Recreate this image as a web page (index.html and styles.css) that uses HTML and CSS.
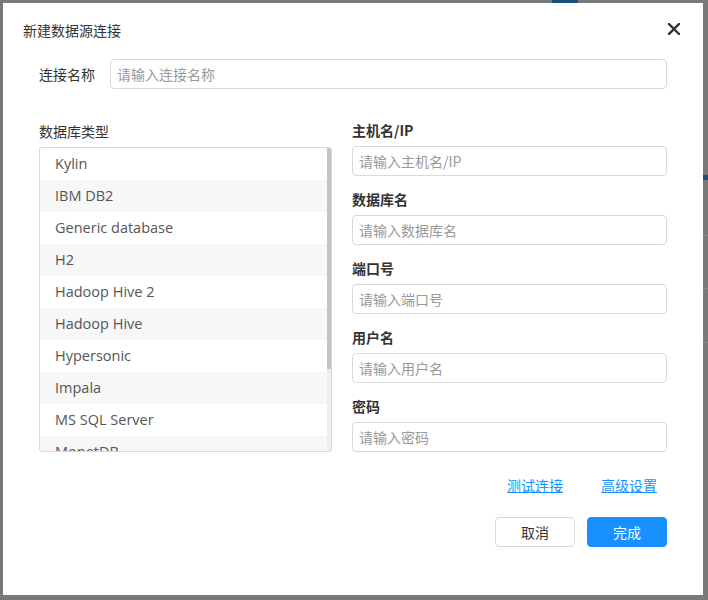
FILE: index.html
```html
<!DOCTYPE html>
<html lang="zh-CN">
<head>
<meta charset="utf-8">
<title>新建数据源连接</title>
<link rel="stylesheet" href="styles.css">
</head>
<body>
<div class="backdrop">
  <span class="bg-tab"></span>
  <span class="bg-edge-blue"></span>
  <span class="bg-line l1"></span>
  <span class="bg-line l2"></span>
  <span class="bg-line l3"></span>
</div>
<div class="dialog">
  <div class="header">
    <div class="title">新建数据源连接</div>
    <button class="close" aria-label="关闭">
      <svg width="12" height="12" viewBox="0 0 12 12"><path d="M1 1 L11 11 M11 1 L1 11" stroke="#333" stroke-width="2.4" stroke-linecap="square" fill="none"/></svg>
    </button>
  </div>
  <div class="name-row">
    <label class="name-label">连接名称</label>
    <input class="input name-input" placeholder="请输入连接名称">
  </div>
  <div class="columns">
    <div class="col-left">
      <div class="col-label">数据库类型</div>
      <div class="list">
        <ul class="items">
          <li>Kylin</li>
          <li>IBM DB2</li>
          <li>Generic database</li>
          <li>H2</li>
          <li>Hadoop Hive 2</li>
          <li>Hadoop Hive</li>
          <li>Hypersonic</li>
          <li>Impala</li>
          <li>MS SQL Server</li>
          <li>MonetDB</li>
        </ul>
        <div class="scrollbar"><div class="thumb"></div></div>
      </div>
    </div>
    <div class="col-right">
      <div class="field">
        <div class="field-label">主机名/IP</div>
        <input class="input" placeholder="请输入主机名/IP">
      </div>
      <div class="field">
        <div class="field-label">数据库名</div>
        <input class="input" placeholder="请输入数据库名">
      </div>
      <div class="field">
        <div class="field-label">端口号</div>
        <input class="input" placeholder="请输入端口号">
      </div>
      <div class="field">
        <div class="field-label">用户名</div>
        <input class="input" placeholder="请输入用户名">
      </div>
      <div class="field">
        <div class="field-label">密码</div>
        <input class="input" placeholder="请输入密码">
      </div>
    </div>
  </div>
  <div class="links">
    <a href="#">测试连接</a>
    <a href="#">高级设置</a>
  </div>
  <div class="buttons">
    <button class="btn">取消</button>
    <button class="btn btn-primary">完成</button>
  </div>
</div>
</body>
</html>
```
FILE: styles.css
```css
* { box-sizing: border-box; }
html, body { margin: 0; padding: 0; }
body {
  width: 708px;
  height: 600px;
  overflow: hidden;
  background: #77797b;
  font-family: "Open Sans", "Noto Sans CJK SC", sans-serif;
  font-size: 14px;
  color: #333;
  position: relative;
  padding: 3px 0 0 3px;
}
.backdrop { position: absolute; inset: 0; }
.bg-tab { position: absolute; left: 552px; top: 0; width: 26px; height: 3px; background: #1d4f7c; }
.bg-edge-blue { position: absolute; left: 703px; top: 175px; width: 5px; height: 5px; background: #1d4f7c; }
.bg-line { position: absolute; left: 703px; width: 5px; height: 1px; background: #8a8a8a; }
.l1 { top: 235px; }
.l2 { top: 288px; }
.l3 { top: 342px; }

.dialog {
  position: relative;
  width: 700px;
  height: 592px;
  background: #fff;
  padding: 17px 36px 0 20px;
  display: flex;
  flex-direction: column;
}
.header {
  display: flex;
  justify-content: space-between;
  align-items: center;
  height: 20px;
}
.title {
  font-size: 14px;
  line-height: 20px;
  color: #333;
  font-family: "Noto Sans CJK SC", sans-serif;
}
.close {
  border: 0;
  background: none;
  padding: 0;
  width: 12px;
  height: 12px;
  margin-right: -13px;
  margin-top: -2px;
  display: flex;
}
.name-row {
  margin-top: 19px;
  padding-left: 16px;
  display: flex;
  align-items: center;
  gap: 15px;
}
.name-label {
  font-family: "Noto Sans CJK SC", sans-serif;
  color: #333;
  line-height: 20px;
  white-space: nowrap;
}
.input {
  display: block;
  width: 100%;
  height: 30px;
  border: 1px solid #d9d9d9;
  border-radius: 4px;
  padding: 0 6px;
  font-family: "Noto Sans CJK SC", sans-serif;
  font-size: 14px;
  color: #333;
  outline: none;
  background: #fff;
}
.input::placeholder { color: #999; }
.name-input { flex: 1; height: 30px; }

.columns {
  margin-top: 31px;
  padding-left: 16px;
  display: flex;
  gap: 20px;
}
.col-left { width: 293px; flex: none; }
.col-right { flex: 1; display: flex; flex-direction: column; gap: 13px; }
.col-label {
  font-family: "Noto Sans CJK SC", sans-serif;
  line-height: 20px;
  color: #333;
  margin-top: 1px;
  margin-bottom: 6px;
}
.list {
  position: relative;
  height: 305px;
  border: 1px solid #d9d9d9;
  border-radius: 3px;
  overflow: hidden;
}
.items { list-style: none; margin: 0; padding: 0; }
.items li {
  height: 32px;
  line-height: 32px;
  padding-left: 15px;
  color: #555;
  font-size: 14.5px;
}
.items li:nth-child(even) { background: #f7f7f7; }
.scrollbar {
  position: absolute;
  top: 0;
  right: 0;
  width: 4px;
  height: 100%;
  background: #ededed;
}
.thumb { width: 4px; height: 221px; background: #c4c4c4; }

.field { display: flex; flex-direction: column; gap: 6px; }
.field-label {
  font-family: "Noto Sans CJK SC", sans-serif;
  font-weight: 700;
  line-height: 20px;
  color: #333;
}

.links {
  margin-top: 23px;
  display: flex;
  justify-content: flex-end;
  gap: 38px;
  padding-right: 10px;
}
.links a {
  font-family: "Noto Sans CJK SC", sans-serif;
  color: #1890ff;
  line-height: 20px;
  text-decoration: underline;
}
.buttons {
  margin-top: 22px;
  display: flex;
  justify-content: flex-end;
  gap: 12px;
}
.btn {
  width: 80px;
  height: 30px;
  border: 1px solid #d9d9d9;
  border-radius: 4px;
  background: #fff;
  color: #333;
  font-family: "Noto Sans CJK SC", sans-serif;
  font-size: 14px;
  padding: 0;
}
.btn-primary {
  background: #1890ff;
  border-color: #1890ff;
  color: #fff;
}
```
